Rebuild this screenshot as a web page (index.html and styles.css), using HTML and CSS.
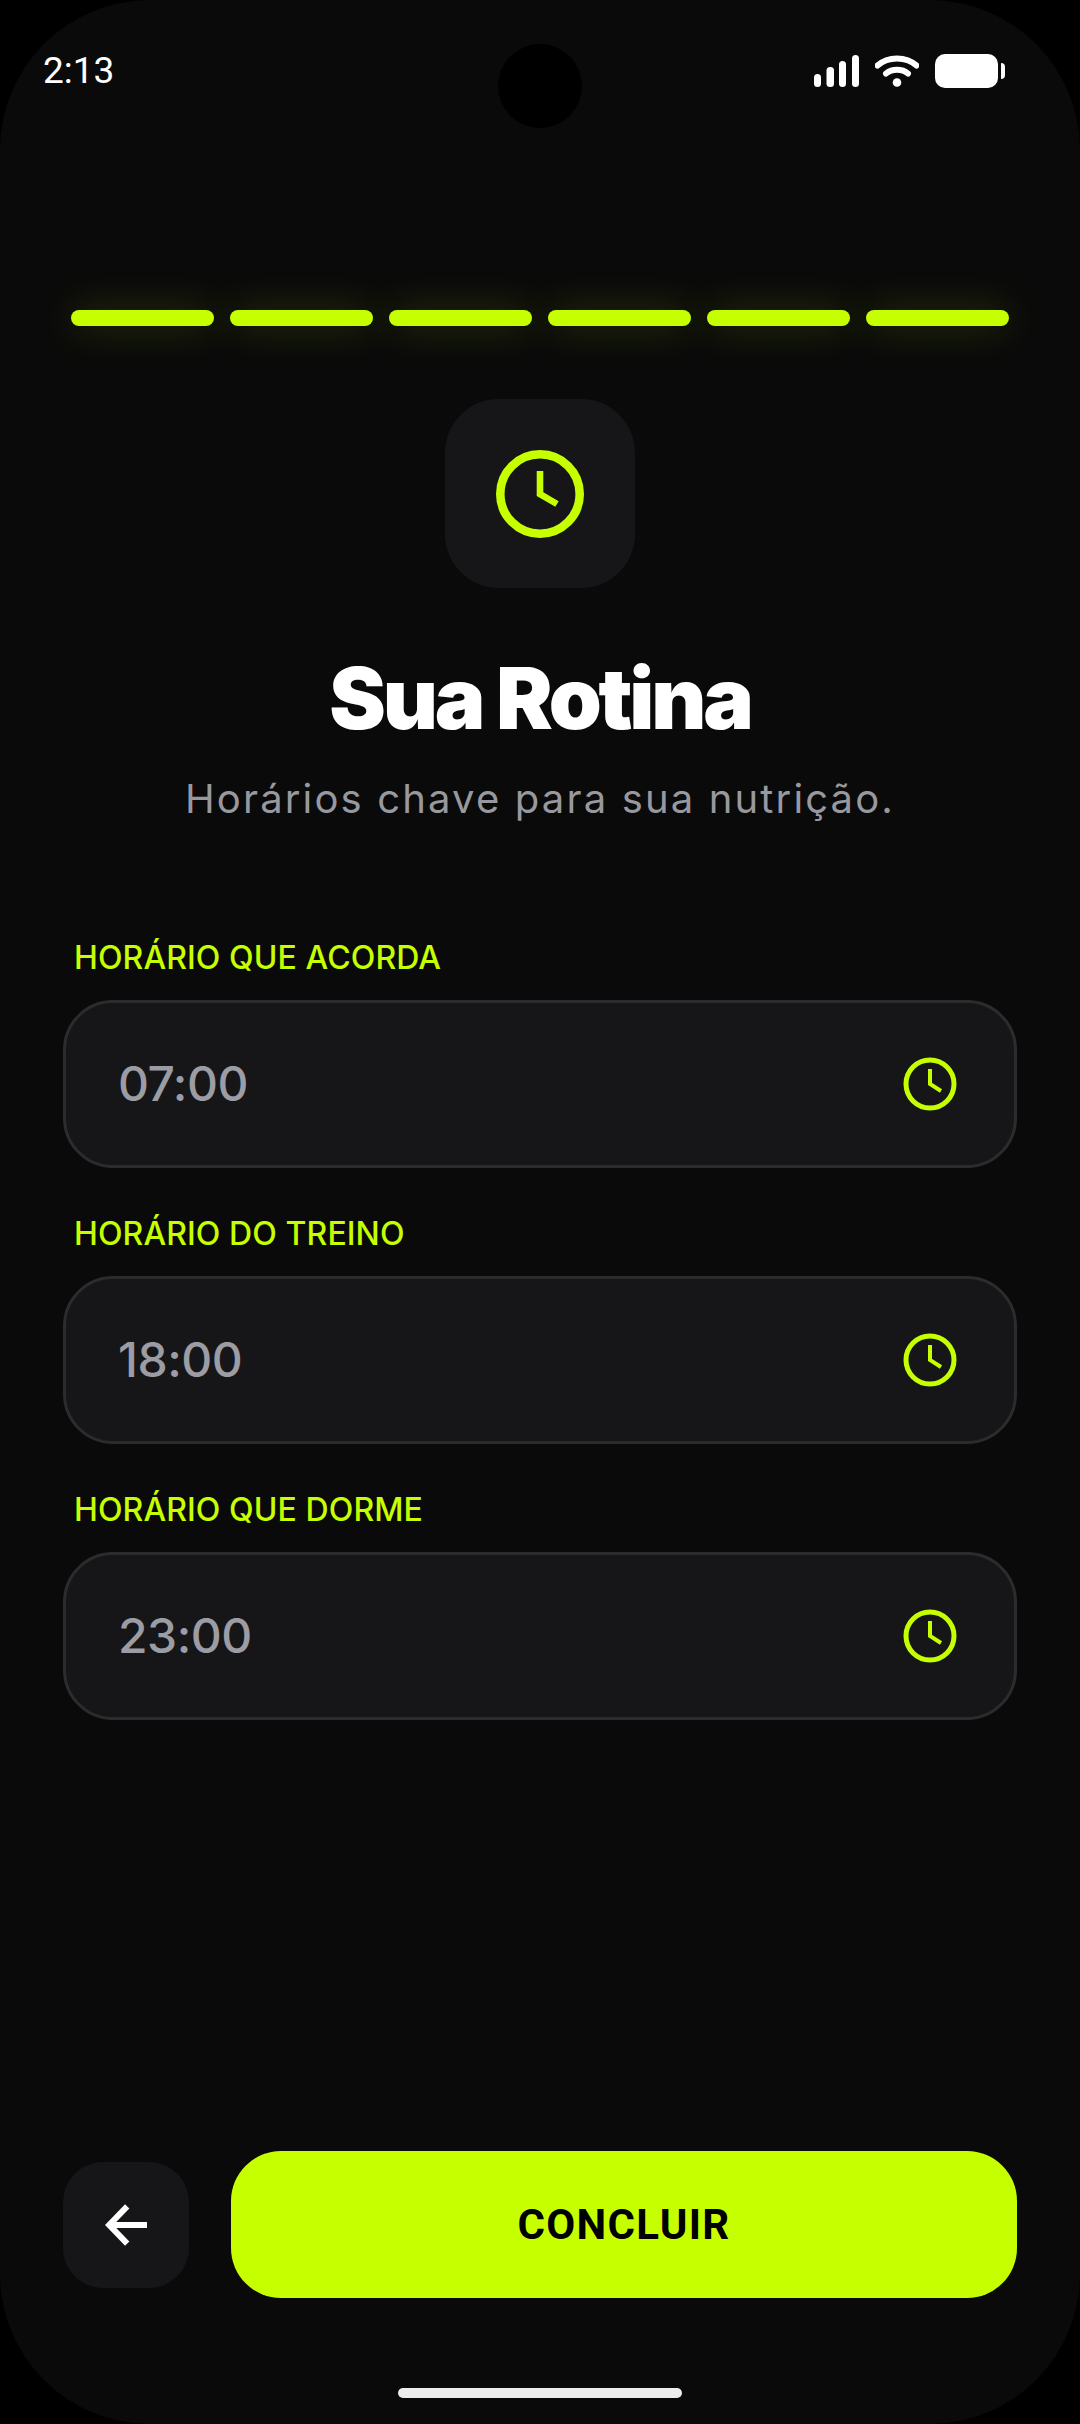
FILE: index.html
```html
<!DOCTYPE html>
<html lang="pt-BR">
<head>
    <meta charset="UTF-8">
    <meta name="viewport" content="width=device-width, initial-scale=1.0">
    <title>Sua Rotina</title>
    <link rel="stylesheet" href="styles.css">
</head>
<body>
<div class="screen">
    <div class="camera"></div>

    <div class="status-bar">
        <span class="status-time">2:13</span>
        <div class="status-icons">
            <svg class="icon-signal" width="45" height="32" viewBox="0 0 45 32">
                <rect x="0" y="19" width="7" height="13" rx="3.5"/>
                <rect x="12.5" y="12" width="7.5" height="20" rx="3.5"/>
                <rect x="25" y="6" width="7" height="26" rx="3.5"/>
                <rect x="38" y="0" width="7" height="32" rx="3.5"/>
            </svg>
            <svg class="icon-wifi" width="44" height="32" viewBox="0 0 44 32">
                <path d="M2.5 10.5C13 1 31 1 41.5 10.5" />
                <path d="M11 18.5C17 13.5 27 13.5 33 18.5" />
                <circle cx="22" cy="27.5" r="4.3"/>
            </svg>
            <div class="battery">
                <div class="battery-body"></div>
                <div class="battery-tip"></div>
            </div>
        </div>
    </div>

    <div class="progress">
        <div class="progress-step"></div>
        <div class="progress-step"></div>
        <div class="progress-step"></div>
        <div class="progress-step"></div>
        <div class="progress-step"></div>
        <div class="progress-step"></div>
    </div>

    <div class="hero-icon">
        <svg width="96" height="96" viewBox="0 0 96 96" class="clock-big">
            <circle cx="48" cy="48" r="39.7"/>
            <path d="M48 25V48L65 58"/>
        </svg>
    </div>

    <h1 class="title">Sua Rotina</h1>
    <p class="subtitle">Horários chave para sua nutrição.</p>

    <form class="routine">
        <div class="field">
            <label class="field-label">HORÁRIO QUE ACORDA</label>
            <div class="field-box">
                <span class="field-value">07:00</span>
                <svg width="60" height="60" viewBox="0 0 60 60" class="clock-small">
                    <circle cx="30" cy="30" r="24"/>
                    <path d="M30 15V30L41 37"/>
                </svg>
            </div>
        </div>
        <div class="field">
            <label class="field-label">HORÁRIO DO TREINO</label>
            <div class="field-box">
                <span class="field-value">18:00</span>
                <svg width="60" height="60" viewBox="0 0 60 60" class="clock-small">
                    <circle cx="30" cy="30" r="24"/>
                    <path d="M30 15V30L41 37"/>
                </svg>
            </div>
        </div>
        <div class="field">
            <label class="field-label">HORÁRIO QUE DORME</label>
            <div class="field-box">
                <span class="field-value">23:00</span>
                <svg width="60" height="60" viewBox="0 0 60 60" class="clock-small">
                    <circle cx="30" cy="30" r="24"/>
                    <path d="M30 15V30L41 37"/>
                </svg>
            </div>
        </div>
    </form>

    <div class="actions">
        <button class="btn-back" type="button">
            <svg width="72" height="72" viewBox="0 0 24 24">
                <path d="M19 12H6.4M12.4 18.2L6.4 12L12.4 5.8"/>
            </svg>
        </button>
        <button class="btn-done" type="button">CONCLUIR</button>
    </div>

    <div class="home-bar"></div>
</div>
</body>
</html>
```

FILE: styles.css
```css
html, body {
    margin: 0;
    background: #000;
}

.screen {
    position: relative;
    width: 1080px;
    height: 2424px;
    border-radius: 150px;
    background: #0a0a0a;
    display: flex;
    flex-direction: column;
    align-items: center;
    overflow: hidden;
}

.camera {
    position: absolute;
    top: 44px;
    left: 498px;
    width: 84px;
    height: 84px;
    border-radius: 50%;
    background: #000;
}

/* status bar */
.status-bar {
    width: 100%;
    box-sizing: border-box;
    height: 140px;
    padding: 54px 75px 0 43px;
    display: flex;
    justify-content: space-between;
    align-items: flex-start;
}

.status-time {
    font-family: Roboto, sans-serif;
    font-size: 37px;
    line-height: 34px;
    color: #fff;
}

.status-icons {
    display: flex;
    align-items: flex-start;
    gap: 16px;
    padding-top: 1px;
}

.icon-signal {
    fill: #fff;
}

.icon-wifi {
    fill: #fff;
    stroke: none;
}

.icon-wifi path {
    fill: none;
    stroke: #fff;
    stroke-width: 6;
    stroke-linecap: round;
}

.battery {
    display: flex;
    align-items: center;
    gap: 3px;
    margin-top: -1px;
}

.battery-body {
    width: 63px;
    height: 34px;
    border-radius: 10px;
    background: #fff;
}

.battery-tip {
    width: 4px;
    height: 16px;
    border-radius: 0 4px 4px 0;
    background: #fff;
}

/* step indicator */
.progress {
    display: flex;
    gap: 16px;
    width: 938px;
    margin-top: 170px;
}

.progress-step {
    flex: 1;
    height: 16px;
    border-radius: 8px;
    background: #c6ff00;
    box-shadow: 0 0 40px rgba(198, 255, 0, 0.22);
}

.hero-icon {
    width: 190px;
    height: 189px;
    margin-top: 73px;
    border-radius: 54px;
    background: #161618;
    display: flex;
    align-items: center;
    justify-content: center;
}

.clock-big circle,
.clock-big path {
    fill: none;
    stroke: #c6ff00;
}

.clock-big circle {
    stroke-width: 8.6;
}

.clock-big path {
    stroke-width: 6.6;
}

.title {
    margin: 63px 0 0;
    font-family: Inter, sans-serif;
    font-size: 85px;
    line-height: 96px;
    font-weight: 900;
    letter-spacing: -3.2px;
    color: #fff;
}

.subtitle {
    margin: 24px 0 0;
    font-family: Inter, sans-serif;
    font-size: 40px;
    line-height: 56px;
    letter-spacing: 2.15px;
    color: #98989f;
}

/* time fields */
.routine {
    width: 954px;
    margin-top: 111px;
    display: flex;
    flex-direction: column;
    gap: 46px;
}

.field-label {
    display: block;
    margin: 0 0 22px 11px;
    font-family: Inter, sans-serif;
    font-size: 32px;
    line-height: 40px;
    font-weight: 500;
    letter-spacing: 0.1px;
    color: #c6ff00;
}

.field-box {
    height: 168px;
    box-sizing: border-box;
    padding: 0 54px 0 52px;
    border: 3px solid #2c2c2e;
    border-radius: 50px;
    background: #161618;
    display: flex;
    align-items: center;
    justify-content: space-between;
}

.field-value {
    padding-bottom: 2px;
    font-family: Inter, sans-serif;
    font-size: 48px;
    font-weight: 500;
    letter-spacing: -0.5px;
    color: #9c9ca4;
}

.clock-small circle,
.clock-small path {
    fill: none;
    stroke: #c6ff00;
}

.clock-small circle {
    stroke-width: 5;
}

.clock-small path {
    stroke-width: 4;
}

/* bottom buttons */
.actions {
    width: 954px;
    margin-top: auto;
    display: flex;
    align-items: center;
    gap: 42px;
}

.btn-back {
    flex: none;
    width: 126px;
    height: 126px;
    padding: 0;
    border: 0;
    border-radius: 40px;
    background: #161618;
    display: flex;
    align-items: center;
    justify-content: center;
}

.btn-back path {
    fill: none;
    stroke: #fff;
    stroke-width: 2;
}

.btn-done {
    flex: 1;
    height: 147px;
    padding: 0;
    border: 0;
    border-radius: 50px;
    background: #c6ff00;
    font-family: Roboto, sans-serif;
    font-size: 42px;
    font-weight: 700;
    letter-spacing: 1.3px;
    color: #000;
}

.home-bar {
    width: 284px;
    height: 10px;
    margin: 90px 0 26px;
    border-radius: 5px;
    background: #eee;
}
```
